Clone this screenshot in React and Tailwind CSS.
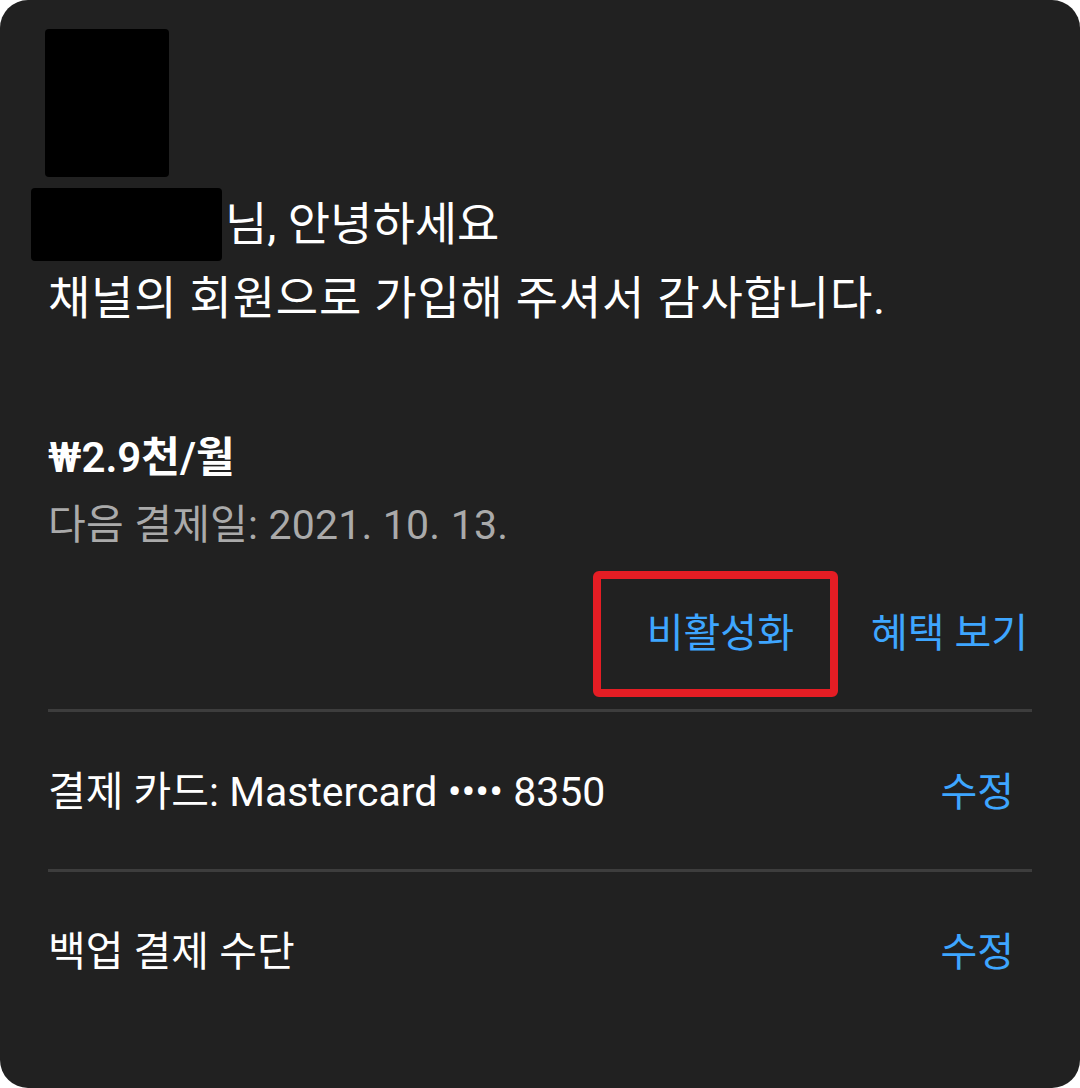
const font = { fontFamily: '"Roboto", "Noto Sans CJK KR", sans-serif' }

function Divider() {
  return <div className="h-[3px] w-full bg-[#3d3d3d]" />
}

function PaymentRow({ label }) {
  return (
    <div className="flex h-[157px] items-center justify-between pr-[18px] pt-[5px]">
      <span className="text-[41px] text-white">{label}</span>
      <span className="text-[40px] text-[#3ea6ff]">수정</span>
    </div>
  )
}

export default function App() {
  return (
    <div className="h-[1088px] w-[1080px] bg-white" style={font}>
      <div className="flex h-full w-full flex-col rounded-[28px] bg-[#212121] px-[48px]">
        <div className="ml-[-3px] mt-[29px] h-[148px] w-[124px] rounded-[4px] bg-black" />

        <div className="mt-[10px] text-[46px] leading-[74px] text-white">
          <div className="flex items-center">
            <span className="ml-[-17px] mr-[3px] h-[73px] w-[191px] rounded-[4px] bg-black" />
            <span>님, 안녕하세요</span>
          </div>
          <div className="tracking-[0.8px]">채널의 회원으로 가입해 주셔서 감사합니다.</div>
        </div>

        <div className="mt-[93px] text-[42px] font-semibold leading-[60px] text-white">₩2.9천/월</div>
        <div className="mt-[7px] text-[41px] leading-[60px] tracking-[0.2px] text-[#aaaaaa]">다음 결제일: 2021. 10. 13.</div>

        <div className="mt-[16px] flex items-center justify-end">
          <button className="flex h-[126px] w-[245px] items-center justify-center rounded-[6px] border-[8px] border-[#e51d24] pl-[10px] text-[40px] text-[#3ea6ff]">
            비활성화
          </button>
          <button className="ml-[33px] mr-[4px] text-[40px] text-[#3ea6ff]">혜택 보기</button>
        </div>

        <div className="mt-[12px]">
          <Divider />
        </div>
        <PaymentRow label="결제 카드: Mastercard •••• 8350" />
        <Divider />
        <PaymentRow label="백업 결제 수단" />
      </div>
    </div>
  )
}
